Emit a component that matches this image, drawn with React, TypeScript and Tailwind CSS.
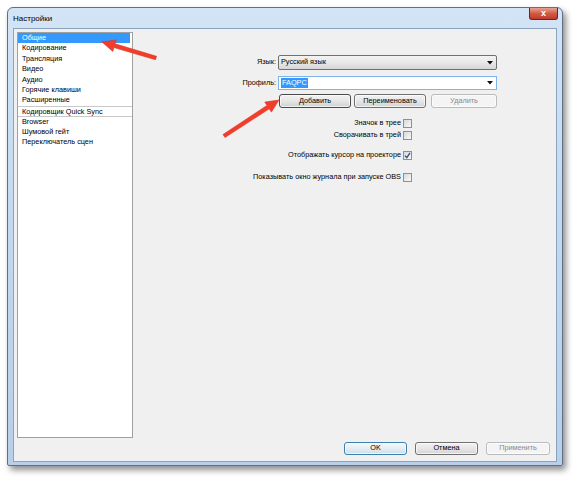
import * as React from 'react';

function cx(...c: (string | false | undefined)[]) {
  return c.filter(Boolean).join(' ');
}

type BtnKind = 'normal' | 'focus' | 'default' | 'disabled';

const btnStyles: Record<BtnKind, string> = {
  normal: 'border-[#707070] bg-gradient-to-b from-[#f2f2f2] via-[#e6e6e6] to-[#d4d4d4] text-black',
  focus: 'border-[#4a4a4a] bg-gradient-to-b from-[#f2f2f2] via-[#e6e6e6] to-[#d0d0d0] text-black',
  default: 'border-[#3c7fb1] bg-gradient-to-b from-[#f4f8fb] via-[#e4edf4] to-[#cfdde9] text-black',
  disabled: 'border-[#b9bcbe] bg-[#f4f4f4] text-[#8a8a8a]',
};

function Btn({ children, kind = 'normal', className }: { children: React.ReactNode; kind?: BtnKind; className?: string }) {
  return (
    <div
      className={cx(
        'flex items-center justify-center rounded-[3px] border shadow-[inset_0_0_0_1px_rgba(255,255,255,0.7)]',
        btnStyles[kind],
        className
      )}
    >
      {children}
    </div>
  );
}

function Caret() {
  return (
    <svg width="6" height="4" viewBox="0 0 6 4" className="shrink-0">
      <path d="M0 0 H6 L3 3.5 Z" fill="#111" />
    </svg>
  );
}

function Check({ checked = false }: { checked?: boolean }) {
  return (
    <span className="grid h-[9px] w-[9px] shrink-0 place-items-center border border-[#8e8f8f] bg-gradient-to-br from-[#d8d8d8] to-[#fafafa]">
      {checked && (
        <svg width="7" height="7" viewBox="0 0 7 7">
          <path d="M1 3.6 L2.8 5.6 L6 0.8" fill="none" stroke="#3b4f8a" strokeWidth="1.4" />
        </svg>
      )}
    </span>
  );
}

const sections = [
  { label: 'Общие', active: true },
  { label: 'Кодирование' },
  { label: 'Трансляция' },
  { label: 'Видео' },
  { label: 'Аудио' },
  { label: 'Горячие клавиши' },
  { label: 'Расширенные' },
  { label: 'Кодировщик Quick Sync', sep: true },
  { label: 'Browser', sep: true },
  { label: 'Шумовой гейт' },
  { label: 'Переключатель сцен' },
];

const toggles = [
  { label: 'Значок в трее', gap: 'mt-[9px]' },
  { label: 'Сворачивать в трей', gap: '' },
  { label: 'Отображать курсор на проекторе', gap: 'mt-[8px]', checked: true },
  { label: 'Показывать окно журнала при запуске OBS', gap: 'mt-[10px]' },
];

export default function App() {
  return (
    <div className="relative h-[480px] w-[575px] overflow-hidden bg-white pl-[7px] pt-[7px] font-['Liberation_Sans',Arial,sans-serif] text-[7.3px] text-black">
      {/* Window */}
      <div className="flex h-[459px] w-[556px] flex-col rounded-t-[6px] rounded-b-[2px] border border-[#5f7085] bg-gradient-to-b from-[#d3e4f6] via-[#c2d8ef] to-[#b7cfea] shadow-[3px_4px_6px_rgba(0,0,0,0.45)]">
        {/* Title bar */}
        <div className="flex h-[20px] items-start justify-between pl-[5px] pr-[4px]">
          <span className="mt-[5px] text-[8px] text-black">Настройки</span>
          <div className="flex h-[12px] w-[29px] items-center justify-center rounded-b-[3px] border border-t-0 border-[#6b2419] bg-gradient-to-b from-[#e6a294] via-[#d25a45] to-[#c0392b]">
            <span className="text-[9px] font-bold leading-none text-white">x</span>
          </div>
        </div>

        {/* Client area */}
        <div className="mx-[5px] mb-[3px] flex flex-1 flex-col border border-[#8aa3bf] bg-[#f0f0f0] p-[3px]">
          <div className="flex flex-1">
            {/* Sections list */}
            <div className="h-[406px] w-[116px] shrink-0 border border-[#a0a0a0] bg-white">
              {sections.map((s) => (
                <div
                  key={s.label}
                  className={cx(
                    'h-[10.4px] pl-[4px] leading-[9.4px] whitespace-nowrap',
                    s.sep && 'border-t border-[#c9c9c9]',
                    s.active && 'mr-[2px] bg-[#3399ff] text-white'
                  )}
                >
                  {s.label}
                </div>
              ))}
            </div>

            {/* General settings */}
            <div className="flex flex-col pt-[23px]">
              <div className="grid grid-cols-[143px_219px] gap-x-[2px]">
                <span className="flex h-[15px] items-center justify-end">Язык:</span>
                <div className="flex h-[15px] items-center justify-between rounded-[2px] border border-[#707070] bg-gradient-to-b from-[#f3f3f3] via-[#e8e8e8] to-[#d6d6d6] pl-[2px] pr-[3px]">
                  <span>Русский язык</span>
                  <Caret />
                </div>

                <span className="mt-[6px] flex h-[14px] items-center justify-end">Профиль:</span>
                <div className="mt-[6px] flex h-[14px] items-center justify-between border border-[#7eb4ea] bg-white pl-[2px] pr-[3px]">
                  <span className="bg-[#3399ff] px-[1px] text-white">FAQPC</span>
                  <Caret />
                </div>

                <span />
                <div className="mt-[4px] flex h-[14px]">
                  <Btn kind="focus" className="ml-[1px] w-[72px]">Добавить</Btn>
                  <Btn className="ml-[3px] w-[72px]">Переименовать</Btn>
                  <Btn kind="disabled" className="ml-[5px] w-[66px]">Удалить</Btn>
                </div>
              </div>

              <div className="flex w-[279px] flex-col items-end">
                {toggles.map((t) => (
                  <div key={t.label} className={cx('flex h-[12px] items-center gap-[2px]', t.gap)}>
                    <span>{t.label}</span>
                    <Check checked={t.checked} />
                  </div>
                ))}
              </div>
            </div>
          </div>

          {/* Dialog buttons */}
          <div className="mt-[4px] mb-[3px] flex justify-end pr-[3px]">
            <Btn kind="default" className="h-[13px] w-[63px]">OK</Btn>
            <Btn className="ml-[8px] h-[13px] w-[63px]">Отмена</Btn>
            <Btn kind="disabled" className="ml-[8px] h-[13px] w-[64px]">Применить</Btn>
          </div>
        </div>
      </div>

      {/* Annotation arrows */}
      <svg className="pointer-events-none absolute left-0 top-0" width="575" height="480" viewBox="0 0 575 480">
        <g fill="#f23d2b" stroke="#e0301f" strokeWidth="0.6" strokeLinejoin="round">
          <polygon points="102,42 116.2,39.9 115.1,43.8 156.5,56.3 155.5,59.7 113.9,47.6 112.8,51.4" />
          <polygon points="279,100 264.8,102.1 267,105.4 223,134.5 225,137.5 269.2,108.8 271.4,112.1" />
        </g>
      </svg>
    </div>
  );
}
